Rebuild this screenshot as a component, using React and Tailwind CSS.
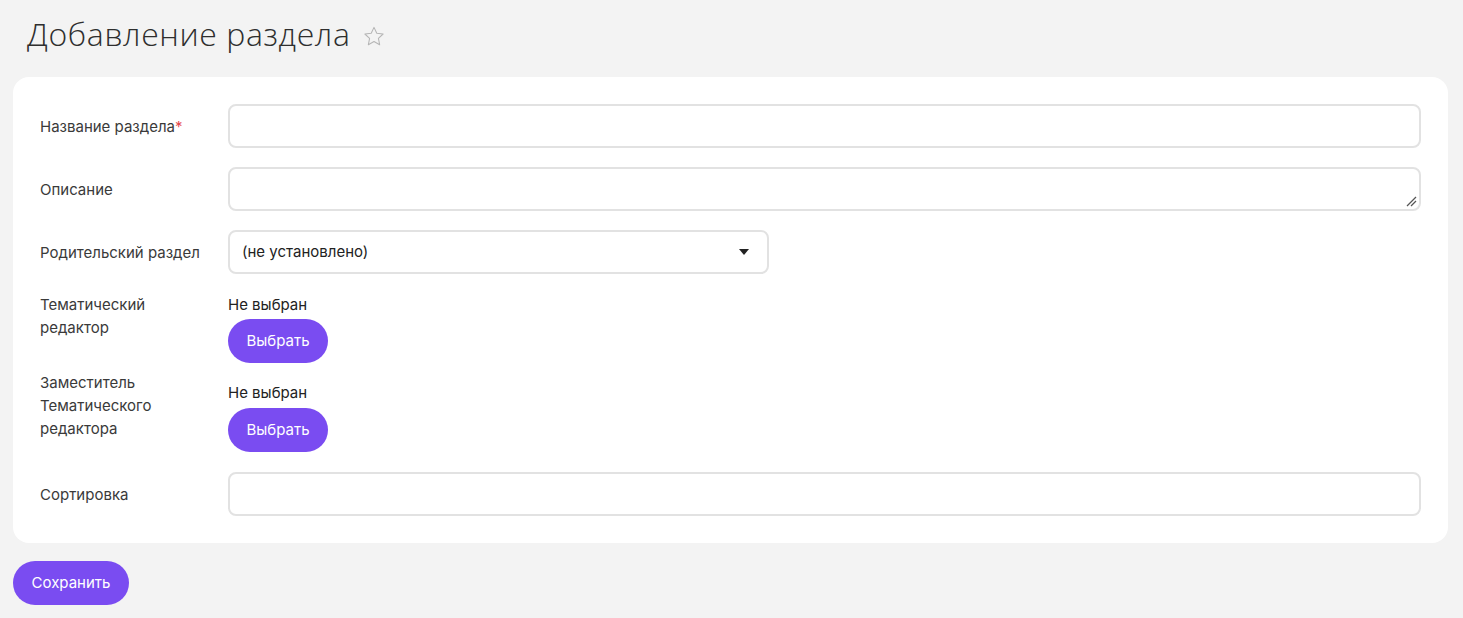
import React from 'react';

const labelCls = 'w-[188px] shrink-0 text-[15px] leading-[23px] text-[#3a3a3a]';
const inputCls = 'h-[44px] rounded-lg border-2 border-[#e2e2e2] bg-white';

const PickButton = () => (
    <button className="h-[44px] w-[100px] rounded-full bg-[#7a4cf1] text-[15px] text-white">
        Выбрать
    </button>
);

export default function App() {
    return (
        <div className="min-h-[618px] bg-[#f3f3f3] pl-[13px] pr-[15px] pt-[14px] font-['Inter','Noto_Sans',sans-serif]">
            <div className="flex items-center pl-[14px]">
                <h1 className="font-['Open_Sans',sans-serif] text-[32px] font-light leading-[40px] text-[#2e2e2e] tracking-[0.6px]">
                    Добавление раздела
                </h1>
                <svg className="ml-[12px] mt-[4px]" width="24" height="23" viewBox="0 0 24 24" fill="none" stroke="#b5b5b5" strokeWidth="1.1" strokeLinejoin="round">
                    <path d="M12 2.5l2.9 6.1 6.6.8-4.9 4.6 1.3 6.6L12 17.3l-5.9 3.3 1.3-6.6-4.9-4.6 6.6-.8z" />
                </svg>
            </div>

            <div className="mt-[23px] rounded-2xl bg-white px-[27px] pt-[27px] pb-[27px]">
                <div className="flex items-center">
                    <div className={labelCls}>
                        Название раздела<span className="text-[#e5484d]">*</span>
                    </div>
                    <div className={`${inputCls} flex-1`} />
                </div>

                <div className="mt-[19px] flex items-center">
                    <div className={labelCls}>Описание</div>
                    <div className={`${inputCls} relative flex-1`}>
                        <svg className="absolute right-[2px] bottom-[2px]" width="12" height="12" viewBox="0 0 12 12" stroke="#555" strokeWidth="1.2">
                            <line x1="2" y1="11" x2="11" y2="2" />
                            <line x1="6" y1="11" x2="11" y2="6" />
                        </svg>
                    </div>
                </div>

                <div className="mt-[19px] flex items-center">
                    <div className={labelCls}>Родительский раздел</div>
                    <div className={`${inputCls} flex w-[541px] items-center justify-between pl-[12px] pr-[18px] text-[15px] text-[#222]`}>
                        <span>(не установлено)</span>
                        <svg width="10" height="6" viewBox="0 0 10 6">
                            <path d="M0 0h10L5 6z" fill="#222" />
                        </svg>
                    </div>
                </div>

                <div className="mt-[19px] flex items-start">
                    <div className={labelCls}>
                        Тематический
                        <br />
                        редактор
                    </div>
                    <div className="flex flex-col items-start">
                        <div className="text-[15px] leading-[23px] text-[#222]">Не выбран</div>
                        <div className="mt-[3px]">
                            <PickButton />
                        </div>
                    </div>
                </div>

                <div className="mt-[8px] flex items-start">
                    <div className={labelCls}>
                        Заместитель
                        <br />
                        Тематического
                        <br />
                        редактора
                    </div>
                    <div className="flex flex-col items-start pt-[10px]">
                        <div className="text-[15px] leading-[23px] text-[#222]">Не выбран</div>
                        <div className="mt-[4px]">
                            <PickButton />
                        </div>
                    </div>
                </div>

                <div className="mt-[20px] flex items-center">
                    <div className={labelCls}>Сортировка</div>
                    <div className={`${inputCls} flex-1`} />
                </div>
            </div>

            <button className="mt-[18px] h-[44px] w-[116px] rounded-full bg-[#7a4cf1] text-[15px] text-white">
                Сохранить
            </button>
        </div>
    );
}
